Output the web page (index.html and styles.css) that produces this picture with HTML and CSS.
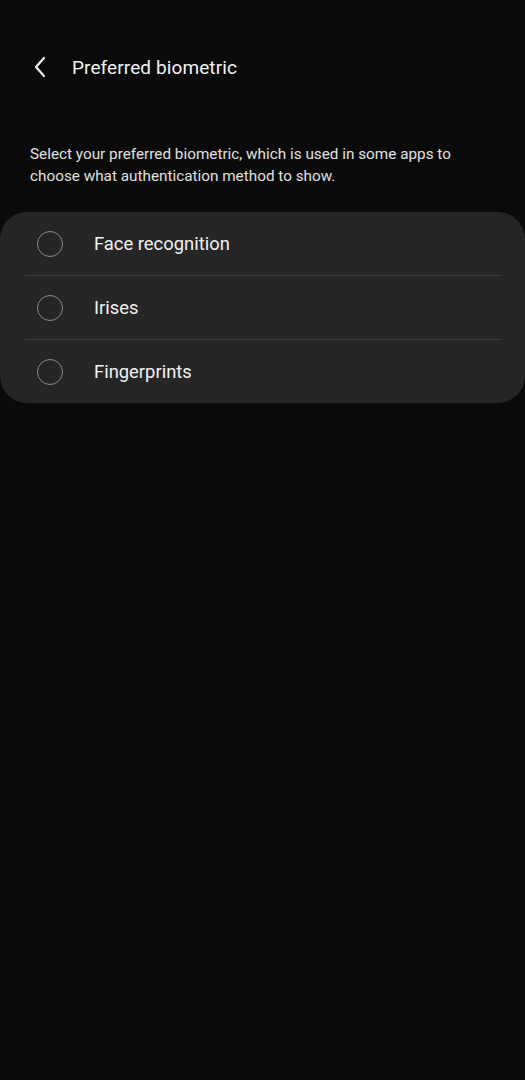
FILE: index.html
```html
<!DOCTYPE html>
<html>
<head>
<meta charset="utf-8">
<link rel="stylesheet" href="styles.css">
</head>
<body>
<div class="page">
  <header class="appbar">
    <span class="back">
      <svg width="14" height="22" viewBox="0 0 14 22"><path d="M11 2 L3 11 L11 20" fill="none" stroke="#f2f2f2" stroke-width="2.2" stroke-linecap="round" stroke-linejoin="round"/></svg>
    </span>
    <h1 class="title">Preferred biometric</h1>
  </header>
  <p class="desc">Select your preferred biometric, which is used in some apps to choose what authentication method to show.</p>
  <div class="card">
    <div class="row"><span class="radio"></span><span class="label">Face recognition</span></div>
    <div class="row"><span class="radio"></span><span class="label">Irises</span></div>
    <div class="row"><span class="radio"></span><span class="label">Fingerprints</span></div>
  </div>
</div>
</body>
</html>
```

FILE: styles.css
```css
html, body {
  margin: 0;
  padding: 0;
  background: #0a0a0a;
}
body {
  font-family: Roboto, "Noto Sans", sans-serif;
  color: #f0f0f0;
  width: 525px;
  height: 1080px;
}
.page {
  display: flex;
  flex-direction: column;
}
.appbar {
  display: flex;
  align-items: center;
  height: 44px;
  margin-top: 45px;
  padding-left: 33px;
}
.back {
  display: flex;
  width: 14px;
  height: 22px;
  margin-right: 25px;
}
.title {
  margin: 0;
  font-size: 19px;
  font-weight: 400;
  color: #f2f2f2;
  letter-spacing: 0.1px;
}
.desc {
  margin: 54px 0 0 0;
  padding: 0 30px;
  font-size: 15.3px;
  line-height: 22px;
  color: #e0e0e0;
}
.card {
  margin-top: 25px;
  background: #252525;
  border-radius: 27px;
  display: flex;
  flex-direction: column;
}
.row {
  display: flex;
  align-items: center;
  height: 64px;
  margin: 0 25px;
  border-bottom: 1px solid #3d3d3d;
  box-sizing: border-box;
}
.row:last-child {
  border-bottom: none;
  height: 63px;
}
.radio {
  width: 26px;
  height: 26px;
  border: 1.5px solid #8a8a8a;
  border-radius: 50%;
  margin-left: 12px;
  box-sizing: border-box;
  flex: none;
}
.label {
  margin-left: 31px;
  font-size: 18.4px;
  color: #f2f2f2;
}
```
